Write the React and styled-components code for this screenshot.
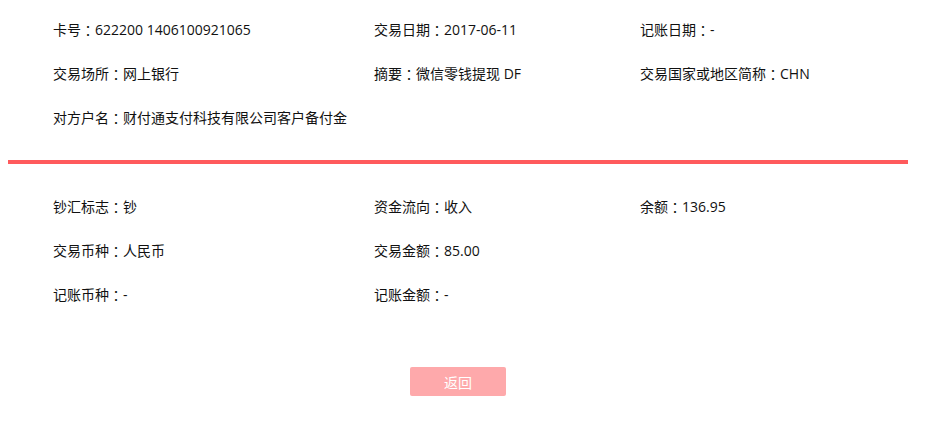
import React from "react";
import styled, { createGlobalStyle } from "styled-components";

const GlobalStyle = createGlobalStyle`
  body {
    margin: 8px;
    background: #fff;
    font-family: "Open Sans", "Noto Sans CJK SC", sans-serif;
    color: #111;
  }
`;

const baseInfo = [
  ["卡号", "622200 1406100921065"],
  ["交易日期", "2017-06-11"],
  ["记账日期", "-"],
  ["交易场所", "网上银行"],
  ["摘要", "微信零钱提现 DF"],
  ["交易国家或地区简称", "CHN"],
  ["对方户名", "财付通支付科技有限公司客户备付金"],
];

const amountInfo = [
  ["钞汇标志", "钞"],
  ["资金流向", "收入"],
  ["余额", "136.95"],
  ["交易币种", "人民币"],
  ["交易金额", "85.00"],
  null,
  ["记账币种", "-"],
  ["记账金额", "-"],
];

const Field = ({ label, value }) => (
  <Item>
    {label}
    <Colon>：</Colon>
    {value}
  </Item>
);

const App = () => {
  return (
    <>
      <GlobalStyle />
      <Page>
        <InfoGrid>
          {baseInfo.map(([label, value]) => (
            <Field key={label} label={label} value={value} />
          ))}
        </InfoGrid>
        <Divider />
        <InfoGrid $top={21}>
          {amountInfo.map((row, i) =>
            row ? (
              <Field key={row[0]} label={row[0]} value={row[1]} />
            ) : (
              <Item key={i} />
            )
          )}
        </InfoGrid>
        <Footer>
          <BackButton>返回</BackButton>
        </Footer>
      </Page>
    </>
  );
};

export default App;

const Page = styled.div`
  width: 900px;
`;

const InfoGrid = styled.div`
  display: grid;
  grid-template-columns: 321px 266px 1fr;
  grid-auto-rows: 44px;
  padding: ${(p) => p.$top || 0}px 0 0 45px;
`;

const Item = styled.div`
  display: flex;
  align-items: center;
  font-size: 14px;
  line-height: 20px;
  white-space: nowrap;
`;

const Colon = styled.span`
  font-family: "Noto Sans CJK TC", "Noto Sans CJK SC", sans-serif;
`;

const Divider = styled.div`
  height: 4px;
  margin-top: 20px;
  background-color: #ff5a5c;
`;

const Footer = styled.div`
  display: flex;
  justify-content: center;
  padding-top: 50px;
`;

const BackButton = styled.button`
  width: 96px;
  height: 29px;
  border: none;
  border-radius: 2px;
  background-color: #fea9ab;
  color: #fff;
  font-family: inherit;
  font-size: 14px;
  cursor: pointer;
`;
